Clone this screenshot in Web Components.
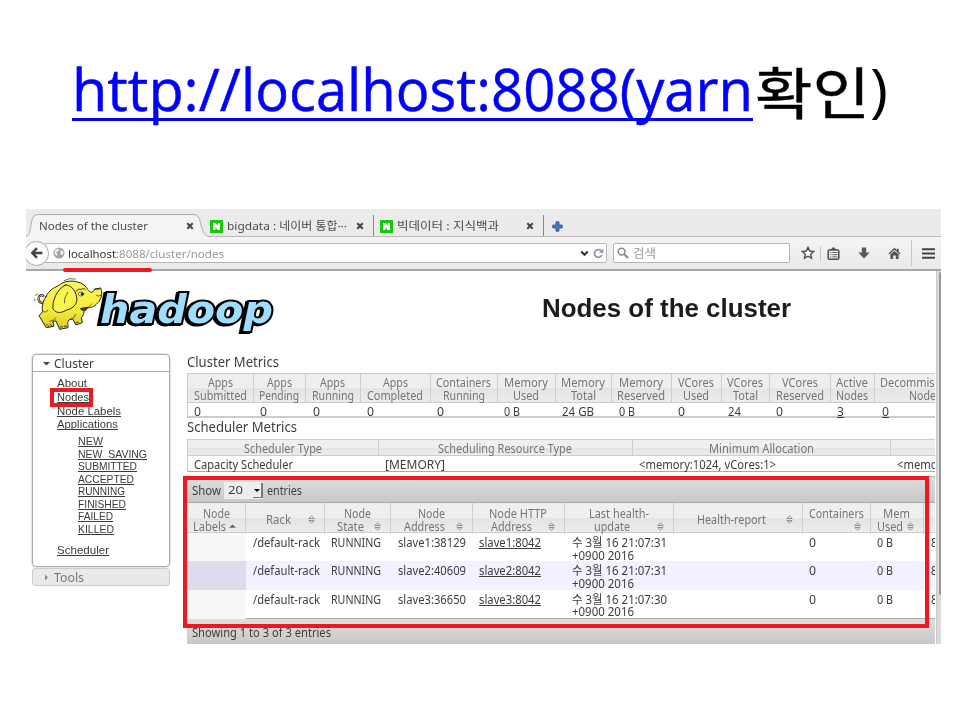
<!DOCTYPE html>
<html lang="ko">
<head>
<meta charset="utf-8">
<title>Nodes of the cluster</title>
<style>
body{margin:0;width:960px;height:720px;overflow:hidden;background:#fff;font-family:"Noto Sans","Noto Sans CJK KR",sans-serif}
</style>
</head>
<body>
<slide-page></slide-page>
<script>
const define=(name,html,setup)=>customElements.define(name,class extends HTMLElement{
  constructor(){super();this.attachShadow({mode:'open'});}
  connectedCallback(){
    if(this.ready)return;this.ready=true;
    this.shadowRoot.innerHTML=typeof html==='function'?html(this):html;
    if(setup)setup(this,this.shadowRoot);
  }
});

/* One line of text condensed or widened to the width in its "w" attribute. */
define('fit-text',`<style>
:host{display:inline-block;white-space:nowrap;text-align:left;vertical-align:top}
span{display:inline-block;transform-origin:0 0}
:host([u]) span{text-decoration:underline;text-decoration-skip-ink:none;text-underline-offset:var(--uo,1px);text-decoration-thickness:var(--ut,1px)}
</style><span><slot></slot></span>`,(el,root)=>{
  const s=root.querySelector('span'),w=+el.getAttribute('w'),n=s.getBoundingClientRect().width;
  el.style.width=w+'px';
  if(n)s.style.transform=`scaleX(${w/n})`;
});
const T=(s,w,u)=>`<fit-text w="${w}"${u?' u':''}>${s.replace(/</g,'&lt;')}</fit-text>`;

const icons={
 close:['0 0 8 8','<path d="M1.3 1.3 6.7 6.7M6.7 1.3 1.3 6.7" stroke="#444" stroke-width="2"/>'],
 naver:['0 0 13 13','<rect width="13" height="13" fill="#19c80a"/><path d="M3 10V3h2.6l2 3V3H10v7H7.5l-2-3v3z" fill="#fff"/>'],
 plus:['0 0 11 11','<path d="M4 .8h3V4h3.2v3H7v3.2H4V7H.8V4H4z" fill="#4a77b4" stroke="#2c568f" stroke-width=".8"/>'],
 globe:['0 0 12 12','<circle cx="6" cy="6" r="5.5" fill="#a3a3a3"/><path d="M2 3.2 4.6 1.5 6.2 2.6 5 4.5 3.2 5.2 4.5 7.2 3.9 9.3 1.6 6.5zM7.2 4.5 9.5 3 10.6 6 9 8.5 7.5 7z" fill="#eee"/>'],
 back:['0 0 12 12','<path d="M6 1.2 1.3 6 6 10.8M1.8 6H11.4" fill="none" stroke="#444" stroke-width="2.5"/>'],
 down:['0 0 9 7','<path d="M1.2 1.5 4.5 4.8 7.8 1.5" fill="none" stroke="#333" stroke-width="2"/>'],
 reload:['0 0 11 11','<path d="M8.9 7.2A3.9 3.9 0 1 1 8.2 2.7" fill="none" stroke="#8d9aa9" stroke-width="1.8"/><path d="M10.3.6V5H6z" fill="#8d9aa9"/>'],
 search:['0 0 12 12','<circle cx="4.6" cy="4.6" r="3.4" fill="none" stroke="#8b8b8b" stroke-width="1.6"/><path d="M7.2 7.2 11 11" stroke="#8b8b8b" stroke-width="2"/>'],
 star:['0 0 14 14','<path d="M7 1.4 8.7 5l4 .5-3 2.7.8 4L7 10.2l-3.5 2 .8-4-3-2.7 4-.5z" fill="#fff" stroke="#4c4c4c" stroke-width="1.4"/>'],
 clip:['0 0 13 13','<rect x="1.200" y="3" width="10.600" height="9.200" rx="1.200" fill="#f4f4f4" stroke="#4c4c4c" stroke-width="1.500"/><path d="M3.800 3V1.700h1.400V.4h2.600v1.300h1.400V3z" fill="#4c4c4c"/><path d="M3 5.500h1.300M5.300 5.500H10.500M3 7.700h1.300M5.300 7.700H10.500M3 9.900h1.300M5.300 9.900H10.500" stroke="#4c4c4c" stroke-width=".9"/>'],
 load:['0 0 12 12','<path d="M3.8.5h4.4v5H11.6L6 11.5.4 5.5h3.4z" fill="#595959"/>'],
 home:['0 0 13 13','<path d="M6.5.8 9 3V1.7h1.7v3L12.6 6.5 11.8 7.4 6.5 2.8 1.2 7.4.4 6.5z" fill="#555"/><path d="M2.4 7.3 6.5 3.9l4.1 3.4V12H7.8V8.6H5.2V12H2.4z" fill="#555"/>'],
 menu:['0 0 13 11','<path d="M0 1.3h13M0 5.5h13M0 9.7h13" stroke="#444" stroke-width="2"/>'],
 sort:['0 0 7 9','<path d="M.8 3.500 3.500.9 6.200 3.500zM.8 5.500 3.500 8.100 6.200 5.500z" fill="none" stroke="#858585" stroke-width=".9"/>'],
 up:['0 0 7 9','<path d="M0 5.800 3.500 2.600 7 5.800z" fill="#666"/>'],
 open:['0 0 7 7','<path d="M0 2h7L3.5 5.5z" fill="#444"/>'],
 shut:['0 0 7 7','<path d="M2 .5v6L5 3.5z" fill="#888"/>'],
};
define('ui-icon',el=>{const[v,p]=icons[el.getAttribute('name')],[, ,w,h]=v.split(' ');
 return `<style>:host{display:block;flex:none;width:${w}px;height:${h}px}svg{display:block}</style><svg width="${w}" height="${h}" viewBox="${v}">${p}</svg>`});
const I=(n,x='')=>`<ui-icon name="${n}" style="${x}"></ui-icon>`;

define('slide-title',`<style>
:host{display:flex;box-sizing:border-box;height:209px;padding:47px 0 0 72px;font:59px/82px "Open Sans","Noto Sans CJK KR",sans-serif;color:#000;--uo:7px;--ut:3px}
.a{color:#00f;-webkit-text-stroke:.5px #00f}
.k{font-size:56px;padding-top:4px;margin-left:2px;-webkit-text-stroke:.5px #000}
</style><span class="a">${T('http://',169,1)}${T('localhost:8088(yarn',512,1)}</span><span class="k">${T('확인',115)}</span><span>${T(')',18)}</span>`);

define('tab-strip',`<style>
:host{display:flex;align-items:center;height:28px;box-sizing:border-box;background:#ebebeb;color:#4b4b4b;font-size:11px;line-height:18px;box-shadow:inset 0 -1px #b9b9b9}
.active{position:relative;width:184px;height:28px;display:flex;align-items:center;box-sizing:border-box;padding:6px 0 0 13px}
.active svg{position:absolute;left:0;top:1px}
.active>*{position:relative}
.tab{display:flex;align-items:center;height:21px;box-sizing:border-box;padding-top:1px;margin-top:5px;border-right:1px solid #8a8a8a}
.tab fit-text{margin-left:4px}
</style>
<div class="active"><svg width="184" height="27"><path d="M0 26.500C5 25 4 17 6 10 7.500 5.500 9 4.500 13 4.500H166C171 4.500 172.500 6 174 11 176 18 177 26.500 184 26.500V27H0z" fill="#f4f4f4"/><path d="M0 26.500C5 25 4 17 6 10 7.500 5.500 9 4.500 13 4.500H166C171 4.500 172.500 6 174 11 176 18 177 26.500 184 26.500" fill="none" stroke="#aaa"/></svg>
${T('Nodes of the cluster',109)}${I('close','margin-left:38px')}</div>
<div class="tab" style="width:164px">${I('naver')}${T('bigdata : 네이버 통합···',120)}${I('close','margin-left:9px')}</div>
<div class="tab" style="width:170px;padding-left:6px">${I('naver')}${T('빅데이터 : 지식백과',102)}${I('close','margin-left:27px')}</div>
${I('plus','margin:6px 0 0 8px')}`);

define('nav-bar',`<style>
:host{display:flex;align-items:center;height:34px;box-sizing:border-box;background:linear-gradient(#f5f5f5,#e9e9e9);border-bottom:2px solid #a8a8a8;font-size:11px;line-height:16px;overflow:hidden}
.back{width:25px;height:25px;box-sizing:border-box;border:1px solid #aaa;border-radius:50%;background:#fcfcfc;margin-left:-2px;display:flex;align-items:center;justify-content:center;flex:none;position:relative;z-index:1}
.field{display:flex;align-items:center;box-sizing:border-box;height:20px;background:#fff;border:1px solid #b5b5b5;border-radius:2px;flex:none}
.field span{padding-top:1px}
.url{width:563px;margin-left:-5px;padding-left:8px}
.find{width:177px;margin-left:6px;padding-left:3px;color:#999;font-size:12px}
i{width:1px;background:#c6c9cc;flex:none}
</style>
<div class="back">${I('back')}</div>
<div class="field url">${I('globe')}<span style="margin-left:3px;color:#333">${T('localhost',48)}</span><span style="color:#999">${T(':8088/cluster/nodes',108)}</span>${I('down','margin-left:356px')}${I('reload','margin-left:4px')}</div>
<div class="field find">${I('search')}<span style="margin-left:4px">${T('검색',23)}</span></div>
${I('star','margin-left:11px')}<i style="height:15px;margin-left:5px"></i>${I('clip','margin-left:6px')}${I('load','margin-left:18px')}${I('home','margin-left:18px')}<i style="height:26px;margin-left:10px"></i>${I('menu','margin-left:10px')}`);

/* Yellow elephant and wordmark. The elephant is drawn on a grid three times finer than the page. */
define('hadoop-logo',`<style>:host{display:block;width:250px;height:62px}svg{display:block}text{font:bold italic 39px "DejaVu Sans",sans-serif;paint-order:stroke;filter:drop-shadow(-2px 1px 0 #000)}</style>
<svg width="250" height="62" viewBox="26 275 250 62">
<defs><linearGradient id="skin" x1="0" y1="0" x2="0" y2="1"><stop offset="0" stop-color="#fbf65a"/><stop offset=".6" stop-color="#f5ec3c"/><stop offset="1" stop-color="#d8c925"/></linearGradient></defs>
<text x="100" y="323" textLength="173" lengthAdjust="spacingAndGlyphs" fill="#9fdcfd" stroke="#000" stroke-width="4">hadoop</text>
<g transform="translate(20 205) scale(.33333)" stroke="#222" stroke-width="3" stroke-linejoin="round" stroke-linecap="round">
<path d="M75 293C65 297 54 290 56 279 57 271 65 268 70 273" fill="none" stroke-width="7"/><path d="M75 293C65 297 54 290 56 279 57 271 65 268 70 273" fill="none" stroke="#eee24c" stroke-width="3"/><path d="M46 272q2-5 7-5M44 282l1 5M132 227q16-10 34-5" fill="none" stroke-width="2"/>
<path d="M78 275C87 255 100 250 118 240 138 222 182 225 199 247 208 264 218 267 224 252L242 249C250 270 242 286 229 298 217 308 209 308 203 309L192 320C191 328 190 332 184 338L187 353 168 360 158 342 148 344C140 351 145 360 144 368L119 373 108 348 99 349 101 364 79 368 57 332 68 320C64 306 69 287 78 275z" fill="url(#skin)"/>
<path d="M136 240C111 252 96 288 99 312 111 328 126 323 140 315 161 311 174 294 170 276 166 252 149 238 136 240z" fill="#faf44e"/>
<path d="M69 320q12 4 15-5M90 349q12-2 18-10M150 344q16-6 18-16M187 309C201 312 210 305 214 297M143 262q-12 18-10 32" fill="none" stroke-width="2"/>
<path d="M182 312C190 321 199 316 202 308z" fill="#a3211d"/>
<path d="M168 258q9-9 16-5M186 251q7-2 10 3" fill="none" stroke-width="2.500"/><ellipse cx="183" cy="267" rx="8" ry="6" fill="#fff" stroke-width="2"/><circle cx="186" cy="267" r="3" fill="#222"/>
<path d="M224 253q9 5 18-3M229 272q8 3 15-1" fill="none" stroke-width="2"/><path d="M80 359l6 4M90 358l5 4M121 366l7-1M133 364l7-1M168 353l7-1" fill="none" stroke-width="2.500"/>
</g>
</svg>`);

define('side-menu',`<style>
:host{display:block;width:138px;color:#3a3a3a;font:12px/14px "Noto Sans",sans-serif;--uo:1px}
.box{box-sizing:border-box;height:213px;border:1px solid #aaa;border-radius:4px;box-shadow:0 0 0 .5px #ccc}
.head{display:flex;align-items:center;height:17px;box-sizing:border-box;padding:1px 0 0 10px;border-bottom:1px solid #aaa}
.head fit-text{margin-left:4px}
.links{padding:5px 0 0 24px;font-family:"Liberation Sans",sans-serif;font-size:11px;line-height:13.8px}
.links>div,.sub>div{display:flex}
.sub{padding:3px 0 9px 21px;line-height:12.500px;display:block!important}
.tools{box-sizing:border-box;margin-top:1px;height:18px;border:1px solid #ccc;border-radius:3px;background:#e9e9e9;color:#777;display:flex;align-items:center;padding:1px 0 0 10px}
.tools fit-text{margin-left:4px}
</style>
<div class="box"><div class="head">${I('open')}${T('Cluster',40)}</div><div class="links">
${[['About',30],['Nodes',32],['Node Labels',64],['Applications',61]].map(a=>`<div>${T(a[0],a[1],1)}</div>`).join('')}
<div class="sub">${[['NEW',25],['NEW_SAVING',69],['SUBMITTED',59],['ACCEPTED',56],['RUNNING',47],['FINISHED',48],['FAILED',35],['KILLED',36]].map(a=>`<div>${T(a[0],a[1],1)}</div>`).join('')}</div>
<div>${T('Scheduler',52,1)}</div></div></div>
<div class="tools">${I('shut')}${T('Tools',30)}</div>`);

const cols=a=>a.slice(1).map((v,i)=>v-a[i]+'px').join(' ');
const tableCss=`:host{display:block;width:748px;overflow:hidden;font-size:12px;line-height:12.800px;color:#3d3d3d;--uo:1px}
.row,.hd{display:grid}.hd{color:#757575;background:linear-gradient(#efefef 0 50%,#e4e4e4 52%,#ececec);border-top:1px solid #ccc;border-bottom:1px solid #ccc;box-sizing:border-box}
.hd>div{display:flex;flex-direction:column;justify-content:center;align-items:center;border-right:1px solid #cfcfcf;box-sizing:border-box}
.row>div{padding-left:6.500px}`;

define('cluster-metrics',()=>{
 const g=[188,253.5,306,360.5,430.5,497.5,555.5,612,671.5,721.5,769.5,830.5,875,975];
 const h=[['Apps',25,'Submitted',53],['Apps',25,'Pending',40],['Apps',25,'Running',42],['Apps',25,'Completed',56],['Containers',55,'Running',42],['Memory',44,'Used',26],['Memory',44,'Total',25],['Memory',44,'Reserved',48],['VCores',36,'Used',26],['VCores',36,'Total',25],['VCores',36,'Reserved',48],['Active',32,'Nodes',32],['Decommissioned',89,'Nodes',32]];
 const v=[['0',7],['0',7],['0',7],['0',7],['0',7],['0 B',16],['24 GB',32],['0 B',16],['0',7],['24',13],['0',7],['3',7,1],['0',7,1]];
 return `<style>${tableCss}.row,.hd{grid-template-columns:${cols(g)}}.hd{height:30px;width:787px}.hd>div{padding-top:3px}.row{height:15px;padding-top:2px;line-height:13px;box-sizing:border-box;border-bottom:2px solid #ccc;width:787px}.row>div:first-child{padding-left:5.500px}:host{border-left:1px solid #ccc;box-sizing:border-box}</style>
 <div class="hd">${h.map(a=>`<div>${T(a[0],a[1])}${T(a[2],a[3])}</div>`).join('')}</div><div class="row">${v.map(a=>`<div>${T(...a)}</div>`).join('')}</div>`});

define('scheduler-metrics',()=>{
 return `<style>${tableCss}.row,.hd{grid-template-columns:${cols([188,378.5,632.5,890.5,1150])}}.hd{height:17px;width:962px}.hd>div{padding-top:3px}.row{height:16px;padding-top:3px;box-sizing:border-box;border-bottom:1px solid #aaa;width:962px}.row>div:first-child{padding-left:5.500px}:host{border-left:1px solid #ccc;box-sizing:border-box}</style>
 <div class="hd">${[['Scheduler Type',78],['Scheduling Resource Type',134],['Minimum Allocation',105],['Maximum Allocation',107]].map(a=>`<div>${T(...a)}</div>`).join('')}</div>
 <div class="row">${[['Capacity Scheduler',99],['[MEMORY]',60],['<memory:1024, vCores:1>',137],['<memory:8192, vCores:8>',137]].map(a=>`<div>${T(...a)}</div>`).join('')}</div>`});

define('nodes-table',()=>{
 const g=[187,246,324.5,391,472.5,565,673.5,802.5,870.5,924,985];
 const h=[['Node',27,'Labels',33],['Rack',25],['Node',27,'State',27],['Node',27,'Address',41],['Node HTTP',58,'Address',41],['Last health-',60,'update',36],['Health-report',69],['Containers',55,'',0],['Mem',27,'Used',26],['Mem',27,'Avail',26]];
 const rows=[['slave1:38129','slave1:8042','31'],['slave2:40609','slave2:8042','31'],['slave3:36650','slave3:8042','30']];
 const ic=i=>I(i?'sort':'up','margin:-2px 9px 0 -3px');
 return `<style>${tableCss}
 .bar{display:flex;align-items:center;box-sizing:border-box;background:linear-gradient(#dedede,#c8c8c8);border-top:1px solid #aaa}
 .top{height:27px;padding:4px 0 0 5px;border-bottom:1px solid #aaa}.foot{height:26px;padding:3px 0 0 5px}
 .sel{display:flex;align-items:center;width:39px;height:17px;background:#eee;margin:-2px 4px 0 3px;padding-left:4px;box-sizing:border-box;font-size:11.500px}
 .btn{display:flex;align-items:center;justify-content:center;width:10px;height:15px;margin-left:auto;background:#eee;border-right:2px solid #777;border-bottom:1px solid #777;box-sizing:border-box}
 .btn b{border:3px solid transparent;border-top:3px solid #000;border-bottom:0}
 .row,.hd{grid-template-columns:${cols(g)};width:798px}.hd{height:30px;border-top:0}.hd>div{padding-top:5px}
 .ln{display:flex;align-items:center;width:100%;height:12.800px}.ln span{flex:1;display:flex;justify-content:center}
 .row{height:28.330px}.row>div{padding-top:4px}.row>div:first-child{background:#f7f7f7}.odd{background:#f1f1ff}.odd>div:first-child{background:#dcdcea}
 </style>
 <div class="bar top">${T('Show',29)}<div class="sel">${T('20',15)}<div class="btn"><b></b></div></div>${T('entries',35)}</div>
 <div class="hd">${h.map((a,i)=>`<div>${a.length>2?T(a[0],a[1])+`<div class="ln"><span>${a[2]?T(a[2],a[3]):''}</span>${ic(i)}</div>`:`<div class="ln"><span>${T(a[0],a[1])}</span>${ic(i)}</div>`}</div>`).join('')}</div>
 ${rows.map((r,i)=>`<div class="row ${i==1?'odd':''}"><div></div><div>${T('/default-rack',67)}</div><div>${T('RUNNING',50)}</div><div>${T(r[0],68)}</div><div>${T(r[1],62,1)}</div><div>${T('수 3월 16 21:07:'+r[2],95)}<br>${T('+0900 2016',62)}</div><div></div><div>${T('0',7)}</div><div>${T('0 B',16)}</div><div>${T('8 GB',25)}</div></div>`).join('')}
 <div class="bar foot">${T('Showing 1 to 3 of 3 entries',139)}</div>`});

define('cluster-page',`<style>
:host{display:flex;height:373px;background:#fff;overflow:hidden}
.view{width:910px;flex:none;overflow:hidden}
.top{display:flex;height:83px;padding-top:4px;box-sizing:border-box}
.top h1{margin:16px 0 0 266px;font:bold 25px/34px "Liberation Sans",sans-serif;color:#1c1c1c}
.cols{display:flex;padding-left:6px}
side-menu{flex:none}
.main{margin-left:17px;width:748px;flex:none;margin-top:-1px}
h2{margin:0;font-weight:400;font-size:13.500px;line-height:18px;color:#3d3d3d}
.h1{height:20px}.h2{height:21px}
nodes-table{margin-top:4px}
.scroll{flex:1;background:#dadada;padding:1px 0 0 2px;border-left:1px solid #c9c9c9}
.scroll div{height:323px;background:#999;border-radius:3px 0 0 3px}
</style>
<div class="view"><div class="top"><hadoop-logo></hadoop-logo><h1>${T('Nodes of the cluster',249)}</h1></div>
<div class="cols"><side-menu></side-menu><div class="main"><h2 class="h1">${T('Cluster Metrics',92)}</h2><cluster-metrics></cluster-metrics><h2 class="h2">${T('Scheduler Metrics',110)}</h2><scheduler-metrics></scheduler-metrics><nodes-table></nodes-table></div></div></div>
<div class="scroll"><div></div></div>`);

define('browser-window',`<style>:host{display:block;width:915px;height:435px;margin-left:26px;overflow:hidden}</style><tab-strip></tab-strip><nav-bar></nav-bar><cluster-page></cluster-page>`);

/* Hand-placed red annotation over the window. */
define('red-mark',el=>{const[x,y,w,h]=el.getAttribute('box').split(' ');
 return `<style>:host{position:absolute;box-sizing:border-box;left:${x}px;top:${y}px;width:${w}px;height:${h}px;border:4px solid #f0181f}:host([line]){border:0;background:#f0181f;border-radius:2px}</style>`});

define('slide-page',`<style>:host{display:block;position:relative;width:960px;height:720px;background:#fff}</style>
<slide-title></slide-title><browser-window></browser-window>
<red-mark line box="63 268 89 4"></red-mark><red-mark box="50 388 43 19"></red-mark><red-mark box="183 476 746 152"></red-mark>`);
</script>
</body>
</html>
